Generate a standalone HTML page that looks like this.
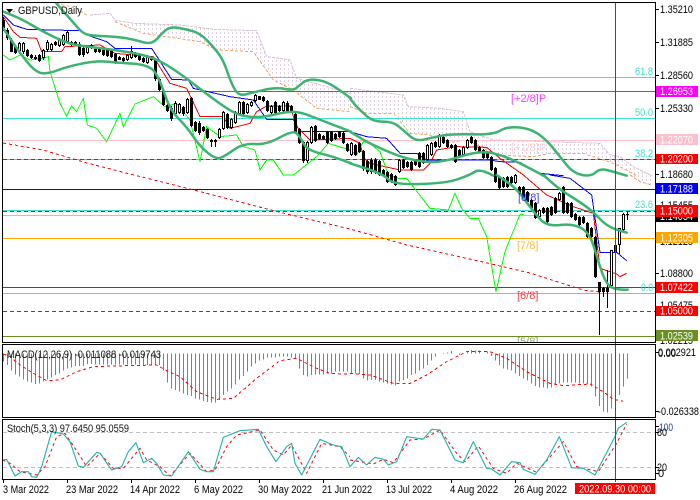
<!DOCTYPE html>
<html><head><meta charset="utf-8"><title>GBPUSD Daily</title>
<style>
html,body{margin:0;padding:0;background:#fff;width:700px;height:500px;overflow:hidden}
svg{position:absolute;left:0;top:0;display:block}
text{font-family:"Liberation Sans",sans-serif;font-size:11px}
.ax{fill:#000}.w{fill:#fff}
.thin{fill:none;stroke-width:3;shape-rendering:crispEdges}
.bb{fill:none;stroke:#3cb371;stroke-width:7.5;stroke-linejoin:round;stroke-linecap:round}
.lbl{font-size:11px;opacity:.75}
</style></head><body>
<svg width="700" height="500" viewBox="0 0 700 500" xmlns="http://www.w3.org/2000/svg">
<defs>
<pattern id="h" patternUnits="userSpaceOnUse" width="12" height="12"><rect width="3" height="6" fill="#e0cfe0"/></pattern>
<clipPath id="main"><rect x="3" y="3" width="652" height="339"/></clipPath>
<clipPath id="mc"><rect x="3" y="345" width="652" height="72"/></clipPath>
<clipPath id="st"><rect x="3" y="420" width="652" height="59"/></clipPath>
</defs>
<rect width="700" height="500" fill="#fff"/>

<g clip-path="url(#main)">
<!-- cloud -->
<g transform="scale(.33333)">
<polygon fill="url(#h)" points="345,60 400,70 540,75 640,88 770,92 800,170 870,180 890,235 1050,280 1050,335 950,325 880,270 820,240 760,155 650,150 600,125 430,100 345,65"/>
<polyline class="thin" stroke="#d8bfd8" stroke-dasharray="9 3" points="270,45 330,40 345,60 400,70 540,75 640,88 770,92 800,170 870,180 890,235 1050,280"/>
<polyline class="thin" stroke="#f4a460" stroke-dasharray="9 6" points="170,10 230,25 260,45"/>
<polyline class="thin" stroke="#f4a460" stroke-dasharray="9 6" points="12,40 20,30 45,35"/>
<polyline class="thin" stroke="#f4a460" stroke-dasharray="9 6" points="345,65 430,100 600,125 650,150 760,155 820,240 880,270 950,325 1050,335"/>
</g>
<g transform="translate(350,0) scale(.33333)">
<polygon fill="url(#h)" points="0,265 80,275 160,285 175,320 270,325 340,335 360,395 430,420 750,430 780,465 810,470 850,500 905,527 860,527 790,490 700,460 600,460 550,470 440,465 350,420 280,430 240,405 180,400 130,340 50,340 0,320"/>
<polyline class="thin" stroke="#d8bfd8" stroke-dasharray="9 3" points="0,265 80,275 160,285 175,320 270,325 340,335 360,395 430,420 750,430 780,465 810,470 850,500 905,527"/>
<polyline class="thin" stroke="#f4a460" stroke-dasharray="9 6" points="0,320 50,340 130,340 180,400 240,405 280,430 350,420 440,465 550,470 600,460 700,460 790,490 860,527"/>
</g>
<g transform="translate(350,175) scale(.33333)">
<polygon fill="url(#h)" points="840,0 905,0 905,30 880,25"/>
<polyline class="thin" stroke="#f4a460" stroke-dasharray="9 6" points="840,0 870,20 905,30"/>
</g>

<!-- horizontal levels -->
<rect x="3" y="77" width="652" height="1" fill="#40e0d0"/>
<rect x="3" y="91" width="652" height="1" fill="#ff00ff"/>
<rect x="3" y="118" width="652" height="1" fill="#40e0d0"/>
<rect x="3" y="140" width="652" height="1" fill="#ffc0cb"/>
<rect x="3" y="159" width="652" height="1" fill="#40e0d0"/>
<line x1="3" x2="655" y1="159.5" y2="159.5" stroke="#f00" stroke-dasharray="4 3" shape-rendering="crispEdges"/>
<rect x="3" y="189" width="652" height="1" fill="#0000ff"/>
<rect x="3" y="210" width="652" height="1" fill="#40e0d0"/>
<line x1="3" x2="655" y1="211.5" y2="211.5" stroke="#f00" stroke-dasharray="4 3" shape-rendering="crispEdges"/>
<rect x="3" y="215" width="652" height="1" fill="#c0c0c0"/>
<rect x="3" y="238" width="652" height="1" fill="#ffa500"/>
<rect x="3" y="287" width="652" height="1" fill="#f00"/>
<rect x="3" y="293" width="652" height="1" fill="#40e0d0"/>
<line x1="3" x2="655" y1="311.5" y2="311.5" stroke="#f00" stroke-dasharray="4 3" shape-rendering="crispEdges"/>
<rect x="3" y="336" width="652" height="1" fill="#6b8e23"/>

<!-- long MA -->
<polyline fill="none" stroke="#f00" stroke-dasharray="3 3" shape-rendering="crispEdges" points="3,143 43,150 87,163 130,174 190,189 267,209 287,214 350,229 407,245 483,262 530,273 583,290 600,292"/>

<!-- Blue / red / lime -->
<g transform="scale(.33333)">
<polyline class="thin" stroke="#00f" points="10,45 40,75 80,88 240,92 260,105 320,125 345,145 455,145 500,215 515,238 565,240 580,265 690,290 760,300 800,358 880,358 900,395 1050,395"/>
<polyline class="thin" stroke="#f00" points="10,50 40,95 60,112 110,115 125,155 185,155 195,140 300,135 345,160 460,170 510,250 560,265 600,350 670,350 690,385 750,370 770,335 800,318 870,318 890,380 930,420 1050,415"/>
<polyline class="thin" stroke="#0f0" points="10,165 30,180 60,165 90,180 130,175 145,170 150,215 180,310 200,348 215,318 230,335 250,295 262,375 290,385 320,425 360,340 370,380 405,312 460,290 495,320 530,310 570,360 600,485 620,380 660,410 710,405 730,440 765,450 780,510 800,480 820,480 850,525 880,525 950,470 985,430 1050,450"/>
</g>
<g transform="translate(350,0) scale(.33333)">
<polyline class="thin" stroke="#00f" points="0,395 50,410 110,415 150,460 200,460 230,480 420,480 450,485 510,487 570,520 640,527"/>
<polyline class="thin" stroke="#f00" points="0,415 30,430 42,475 60,490 150,510 220,510 240,490 260,450 320,440 410,442 450,475 520,525"/>
<polyline class="thin" stroke="#0f0" points="0,450 20,465 40,425 60,430 90,455 115,525 145,535 170,535 240,625 295,630 315,580 335,625 360,655 385,655 410,710 438,875 465,755 510,643 520,643"/>
</g>
<g transform="translate(350,175) scale(.33333)">
<polyline class="thin" stroke="#00f" points="600,0 660,10 725,60 750,232 800,232 830,257"/>
<polyline class="thin" stroke="#f00" points="520,0 590,60 670,95 730,115 750,280 800,297 810,305 830,295"/>
</g>

<!-- Candles -->
<g transform="translate(.5,0)" fill="none" shape-rendering="crispEdges">
<path stroke="#000" d="M3 17V31M7 28V40M11 38V52M15 46V54M19 42V54M23 42V54M27 49V57M31 54V59M35 55V60M39 54V62M43 49V60M47 40V52M51 43V51M55 41V46M59 38V47M63 34V46M67 31V43M71 41V46M75 41V46M79 42V56M83 47V57M87 46V54M91 44V49M95 48V53M99 48V53M103 49V56M107 49V57M111 50V58M115 53V64M119 56V60M123 57V62M127 54V61M131 46V59M135 52V58M139 54V61M143 57V63M147 55V64M151 56V61M155 58V81M159 78V91M163 90V106M167 104V112M171 106V121M175 101V115M179 103V114M183 106V116M187 98V114M191 97V127M195 121V132M199 121V135M203 126V132M207 128V139M211 139V147M215 139V147M219 128V139M223 111V130M227 113V129M231 118V129M235 111V124M239 101V115M243 101V115M247 103V114M251 101V107M255 94V102M259 96V100M263 96V102M267 100V112M271 105V115M275 101V114M279 105V112M283 101V112M287 101V113M291 105V112M295 113V134M299 128V144M303 141V163M307 141V163M311 126V144M315 125V142M319 133V140M323 135V140M327 131V144M331 131V142M335 133V140M339 131V138M343 131V144M347 143V152M351 142V156M355 144V156M359 142V153M363 150V171M367 160V174M371 158V174M375 158V174M379 160V176M383 169V177M387 171V183M391 173V183M395 175V186M399 159V173M403 159V169M407 161V168M411 161V171M415 159V166M419 152V168M423 152V164M427 144V161M431 142V156M435 141V148M439 134V148M443 136V144M447 139V148M451 144V149M455 144V163M459 149V158M463 146V156M467 139V149M471 136V144M475 139V151M479 146V153M483 149V159M487 151V159M491 156V171M495 167V183M499 176V189M503 177V188M507 176V188M511 176V184M515 174V184M519 186V194M523 186V199M527 191V203M531 199V209M535 202V219M539 209V218M543 207V214M547 207V223M551 206V216M555 197V214M559 192V201M563 186V214M567 202V214M571 202V218M575 213V221M579 216V226M583 216V224M587 222V238M591 227V238M595 236V278M599 282V335M603 287V297M607 270V308M611 250V287M615 243V260M619 228V254M623 213V231M627 211V220"/>
<path stroke="#000" stroke-width="3" d="M3 20V28M7 30V38M11 40V52M15 47V53M19 43V51M23 43V52M27 50V56M31 55V58M35 57V59M39 55V61M43 50V58M47 42V50M51 44V50M55 42V45M59 39V46M63 35V45M67 32V42M71 42V45M75 42V45M79 44V55M83 48V55M87 47V53M91 45V48M95 49V52M99 49V52M103 50V55M107 50V56M111 51V57M115 54V63M119 57V60M123 58V61M127 55V60M131 51V58M135 54V57M139 55V60M143 58V62M147 56V63M151 57V60M155 59V79M159 79V90M163 91V105M167 105V111M171 108V119M175 103V114M179 104V113M183 107V114M187 99V113M191 98V126M195 122V131M199 123V133M203 127V131M207 129V138M211 140V142M215 140V142M219 129V138M223 112V129M227 114V128M231 119V128M235 112V123M239 102V114M243 102V114M247 104V113M251 102V106M255 95V101M259 96V100M263 97V101M267 101V111M271 106V113M275 102V113M279 106V111M283 102V111M287 103V111M291 106V111M295 114V133M299 129V143M303 142V161M307 142V161M311 127V143M315 126V141M319 134V139M323 136V139M327 132V143M331 132V141M335 134V139M339 132V137M343 133V143M347 144V151M351 143V155M355 145V155M359 143V152M363 151V169M367 161V172M371 160V172M375 160V172M379 161V175M383 170V176M387 172V182M391 174V182M395 176V185M399 160V172M403 160V168M407 162V167M411 162V170M415 160V165M419 153V167M423 153V163M427 145V160M431 143V155M435 142V147M439 135V147M443 137V143M447 140V147M451 145V148M455 145V162M459 150V157M463 147V155M467 140V148M471 137V143M475 140V150M479 147V152M483 150V158M487 152V158M491 157V170M495 168V182M499 177V188M503 178V187M507 177V187M511 177V183M515 175V183M519 187V193M523 187V198M527 192V202M531 200V208M535 203V218M539 210V217M543 208V213M547 208V222M551 207V215M555 198V213M559 193V200M563 187V213M567 203V213M571 203V217M575 214V220M579 217V225M583 217V223M587 223V237M591 228V237M595 237V277M599 282V292M603 288V292M607 288V292M611 250V286M615 245V252M619 228V245M623 214V230M627 214V215"/>
<path stroke="#fff" d="M19 44V50M23 44V51M43 51V57M47 43V49M51 45V49M59 40V45M63 36V44M67 33V41M87 48V52M91 46V47M127 56V59M131 52V57M147 57V62M175 104V113M179 105V112M187 100V112M219 130V137M223 113V128M231 120V127M235 113V122M239 103V113M247 105V112M251 103V105M255 96V100M271 107V112M283 103V110M307 143V160M311 128V142M351 144V154M399 161V171M427 146V159M431 144V154M439 136V146M463 148V154M467 141V147M515 176V182M539 211V216M559 194V199M611 251V285M619 229V244M623 215V229"/>
</g>

<!-- Bollinger (drawn above candles in the reference) -->
<g transform="scale(.33333)">
<path class="bb" d="M165 5L182 25Q200 45 215 62Q230 80 242 92Q255 105 277 106Q300 108 325 109Q350 110 375 114Q400 118 420 124Q440 131 452 128Q465 125 477 110Q490 95 502 87Q515 80 537 84Q560 88 580 94Q600 100 620 120Q640 140 655 160Q670 180 680 210Q690 240 700 260Q710 280 720 283Q730 286 745 281Q760 277 795 269Q830 262 855 267Q880 272 890 263Q900 255 910 247Q920 240 935 239Q950 238 970 244Q990 250 1021 272L1053 295"/>
<path class="bb" d="M10 35L35 45Q60 55 90 72Q120 90 160 110Q200 130 230 135Q260 140 305 145Q350 150 405 160Q460 170 500 195Q540 220 575 247Q610 275 655 307Q700 340 725 346Q750 352 775 351Q800 350 840 340Q880 330 915 342Q950 355 1001 375L1053 395"/>
<path class="bb" d="M10 85L35 122Q60 160 85 190Q110 220 130 220Q150 220 175 210Q200 200 245 191Q290 182 320 185Q350 188 400 191Q450 195 465 217Q480 240 495 285Q510 330 535 355Q560 380 580 410Q600 440 625 460Q650 480 665 472Q680 465 705 447Q730 430 765 432Q800 435 840 412Q880 390 890 400Q900 410 910 430Q920 450 960 460Q1000 470 1026 480L1053 490"/>
</g>
<g transform="translate(350,0) scale(.33333)">
<path class="bb" d="M0 295L17 317Q35 335 52 350Q70 365 100 365Q130 365 147 380Q165 395 182 410Q200 425 225 418Q250 412 275 407Q300 402 365 403Q430 405 450 392Q470 380 505 382Q540 385 565 402Q590 420 610 445Q630 470 650 495Q670 520 697 525Q725 530 737 517Q750 505 770 510Q790 515 830 527"/>
<path class="bb" d="M0 395L50 425Q100 450 140 465Q180 480 225 485Q270 490 330 470Q390 450 430 460Q470 470 510 490Q550 510 580 527"/>
<path class="bb" d="M0 490L50 506Q100 522 115 538Q130 555 210 552Q290 550 325 537Q360 525 375 515Q390 505 430 527"/>
</g>
<g transform="translate(350,175) scale(.33333)">
<path class="bb" d="M580 0L605 22Q630 45 675 72Q720 100 745 127Q770 155 800 164L830 173"/>
<path class="bb" d="M440 0L470 20Q500 40 525 75Q550 110 570 132Q590 155 630 150Q670 145 695 160Q720 175 732 217Q745 260 757 295Q770 330 785 337Q800 345 833 344"/>
</g>
</g>

<!-- MACD -->
<g clip-path="url(#mc)">
<g transform="translate(0,340) scale(.33333)">
<path class="thin" stroke="#3a8fe8" d="M10 40V65M22 40V75M34 40V92M46 40V103M58 40V110M70 40V118M82 40V125M94 40V128M106 40V132M118 40V130M130 40V125M142 40V118M154 40V112M166 40V105M178 40V100M190 40V92M202 40V85M214 40V82M226 40V78M238 40V78M250 40V78M262 40V72M274 40V72M286 40V74M298 40V74M310 40V74M322 40V74M334 40V74M346 40V74M358 40V74M370 40V74M382 40V74M394 40V74M406 40V74M418 40V74M430 40V75M442 40V75M454 40V75M466 40V75M478 40V75M490 40V92M502 40V128M514 40V145M526 40V150M538 40V155M550 40V160M562 40V165M574 40V168M586 40V175M598 40V178M610 40V183M622 40V186M634 40V188M646 40V188M658 40V180M670 40V165M682 40V155M694 40V145M706 40V133M718 40V118M730 40V108M742 40V95M754 40V80M766 40V70M778 40V62M790 40V58M802 40V52M814 40V52M826 40V52M838 40V50M850 40V50M862 40V50M874 40V53M886 40V55M898 40V85M910 40V105M922 40V110M934 40V105M946 40V103M958 40V103M970 40V103M982 40V100M994 40V100M1006 40V95M1018 40V95M1030 40V95M1042 40V95"/>
<polyline class="thin" stroke="#f00" stroke-dasharray="9 9" points="10,42 30,50 60,75 100,100 140,122 180,120 230,95 280,80 380,77 470,75 500,92 540,110 590,155 650,178 700,175 770,115 840,62 890,55 950,85 990,100 1050,103"/>
</g>
<g transform="translate(350,340) scale(.33333)">
<path class="thin" stroke="#3a8fe8" d="M4 40V100M16 40V100M28 40V102M40 40V115M52 40V122M64 40V120M76 40V120M88 40V125M100 40V128M112 40V130M124 40V133M136 40V137M148 40V125M160 40V120M172 40V115M184 40V105M196 40V100M208 40V92M220 40V85M232 40V75M244 40V62M256 40V50M280 40V42M292 40V37M304 40V33M316 40V40M328 40V45M340 40V40M352 40V33M364 40V30M376 40V32M388 40V32M400 40V40M412 40V35M424 40V48M436 40V62M448 40V75M460 40V85M472 40V88M484 40V92M496 40V100M508 40V108M520 40V115M532 40V122M544 40V130M556 40V138M568 40V142M580 40V143M592 40V145M604 40V143M616 40V135M628 40V130M640 40V128M652 40V127M664 40V127M676 40V127M688 40V130M700 40V130M712 40V133M724 40V140M736 40V170M748 40V198M760 40V215M772 40V218M784 40V205M808 40V165M820 40V140M832 40V115"/>
<polyline class="thin" stroke="#f00" stroke-dasharray="9 9" points="0,100 60,105 130,130 180,130 230,105 290,65 350,35 420,35 470,55 530,95 600,130 640,137 720,132 760,155 790,178 820,184"/>
</g>
</g>

<!-- Stoch -->
<g clip-path="url(#st)">
<line x1="3" x2="655" y1="432.5" y2="432.5" stroke="#c0c0c0" stroke-dasharray="4 3" shape-rendering="crispEdges"/>
<line x1="3" x2="655" y1="467.5" y2="467.5" stroke="#c0c0c0" stroke-dasharray="4 3" shape-rendering="crispEdges"/>
<g transform="translate(0,340) scale(.33333)">
<polyline fill="none" stroke="#f00" stroke-width="3" stroke-dasharray="9 9" points="8,360 30,370 60,395 110,405 135,380 170,290 195,280 235,340 260,380 300,340 340,385 370,385 420,325 440,360 480,380 510,408 570,340 620,395 645,390 680,320 710,285 780,270 820,330 850,345 875,315 920,400 965,310 1020,320 1050,350"/>
<polyline fill="none" stroke="#20b2aa" stroke-width="3.3" stroke-linejoin="round" points="8,360 20,358 45,408 65,395 85,395 95,410 110,412 125,380 155,275 190,282 210,305 235,378 250,382 290,337 300,340 335,390 365,380 385,335 408,308 430,368 455,355 470,370 490,405 515,408 565,335 600,388 620,395 640,395 670,292 695,282 720,272 775,268 800,320 828,365 860,320 875,310 885,370 905,405 960,298 1000,315 1025,320 1050,380"/>
</g>
<g transform="translate(350,340) scale(.33333)">
<polyline fill="none" stroke="#f00" stroke-width="3" stroke-dasharray="9 9" points="0,360 30,365 70,372 100,358 130,368 180,300 220,297 270,270 320,340 345,365 385,318 430,385 470,400 500,370 560,397 640,305 680,380 745,395 800,310 830,252"/>
<polyline fill="none" stroke="#20b2aa" stroke-width="3.3" stroke-linejoin="round" points="0,380 25,352 50,375 75,352 100,358 115,375 140,365 170,290 220,297 245,268 270,270 315,360 340,368 370,305 410,385 425,387 450,405 485,365 510,368 520,388 555,403 590,360 628,290 665,383 700,385 735,405 795,290 805,265 830,247"/>
</g>
</g>

<!-- vertical cursor -->
<rect x="615" y="3" width="1" height="479" fill="#f00"/>

<!-- frames -->
<g fill="#000">
<rect x="2" y="2" width="654" height="1"/>
<rect x="2" y="2" width="1" height="341"/>
<rect x="655" y="2" width="1" height="341"/>
<rect x="2" y="342" width="654" height="1"/>
<rect x="2" y="344" width="654" height="1"/>
<rect x="2" y="344" width="1" height="74"/>
<rect x="655" y="344" width="1" height="74"/>
<rect x="2" y="417" width="654" height="1"/>
<rect x="2" y="419" width="654" height="1"/>
<rect x="2" y="419" width="1" height="61"/>
<rect x="655" y="419" width="1" height="61"/>
<rect x="2" y="479" width="654" height="1"/>
<!-- right ticks -->
<rect x="655" y="9" width="4" height="1"/><rect x="655" y="42" width="4" height="1"/><rect x="655" y="75" width="4" height="1"/><rect x="655" y="108" width="4" height="1"/><rect x="655" y="174" width="4" height="1"/><rect x="655" y="273" width="4" height="1"/><rect x="655" y="352" width="4" height="1"/><rect x="655" y="411" width="4" height="1"/><rect x="655" y="426" width="4" height="1"/><rect x="655" y="432" width="4" height="1"/><rect x="655" y="467" width="4" height="1"/><rect x="655" y="473" width="4" height="1"/>
<!-- bottom ticks -->
<rect x="3" y="480" width="1" height="3"/><rect x="67" y="480" width="1" height="3"/><rect x="131" y="480" width="1" height="3"/><rect x="195" y="480" width="1" height="3"/><rect x="259" y="480" width="1" height="3"/><rect x="323" y="480" width="1" height="3"/><rect x="387" y="480" width="1" height="3"/><rect x="451" y="480" width="1" height="3"/><rect x="515" y="480" width="1" height="3"/>
</g>

<!-- Title -->
<polygon points="6,9 13,9 9.500,13" fill="#000"/>
<text x="18" y="14" textLength="64" lengthAdjust="spacingAndGlyphs" fill="#111">GBPUSD,Daily</text>

<!-- Fibo & Murray labels -->
<g fill="#40e0d0">
<text x="635" y="75" textLength="18" lengthAdjust="spacingAndGlyphs">61.8</text>
<text x="635" y="116" textLength="18" lengthAdjust="spacingAndGlyphs">50.0</text>
<text x="635" y="157" textLength="18" lengthAdjust="spacingAndGlyphs">38.2</text>
<text x="635" y="208" textLength="18" lengthAdjust="spacingAndGlyphs">23.6</text>
<text x="641" y="291" textLength="12" lengthAdjust="spacingAndGlyphs">0.0</text>
</g>
<text x="511" y="102" class="lbl" fill="#ff00ff">[+2/8]P</text>
<text x="511" y="151" class="lbl" fill="#ffc0cb">[+1/8]P</text>
<text x="518" y="201" class="lbl" fill="#0000ff">[8/8]</text>
<text x="517" y="249" class="lbl" fill="#ffa500">[7/8]</text>
<text x="517" y="299" class="lbl" fill="#f00">[6/8]</text>
<g clip-path="url(#main)"><text x="517" y="345" class="lbl" fill="#6b8e23">[5/8]</text></g>

<!-- Axis labels -->
<g class="ax">
<text x="660" y="13" textLength="33" lengthAdjust="spacingAndGlyphs">1.35210</text>
<text x="660" y="46" textLength="33" lengthAdjust="spacingAndGlyphs">1.31885</text>
<text x="660" y="79" textLength="33" lengthAdjust="spacingAndGlyphs">1.28560</text>
<text x="660" y="112" textLength="33" lengthAdjust="spacingAndGlyphs">1.25330</text>
<text x="660" y="178" textLength="33" lengthAdjust="spacingAndGlyphs">1.18680</text>
<text x="660" y="209" textLength="33" lengthAdjust="spacingAndGlyphs">1.15455</text>
<text x="660" y="245" textLength="33" lengthAdjust="spacingAndGlyphs">1.12125</text>
<text x="660" y="277" textLength="33" lengthAdjust="spacingAndGlyphs">1.08800</text>
<text x="660" y="309" textLength="33" lengthAdjust="spacingAndGlyphs">1.05475</text>
<text x="660" y="344" textLength="33" lengthAdjust="spacingAndGlyphs">1.02215</text>
</g>
<rect x="656" y="86" width="42" height="11" fill="#ff00ff"/><text x="660" y="95" class="w" textLength="33" lengthAdjust="spacingAndGlyphs">1.26953</text>
<rect x="656" y="134" width="42" height="11" fill="#ffc0cb"/><text x="660" y="143.500" class="w" textLength="33" lengthAdjust="spacingAndGlyphs">1.22070</text>
<rect x="656" y="154" width="42" height="10" fill="#f00"/><text x="660" y="162.500" class="w" textLength="33" lengthAdjust="spacingAndGlyphs">1.20200</text>
<rect x="656" y="183" width="42" height="11" fill="#00f"/><text x="660" y="192.500" class="w" textLength="33" lengthAdjust="spacingAndGlyphs">1.17188</text>
<rect x="656" y="214" width="42" height="8" fill="#000"/><text x="660" y="220" class="w" textLength="33" lengthAdjust="spacingAndGlyphs">1.14034</text>
<rect x="656" y="205" width="42" height="12" fill="#f00"/><text x="660" y="214.500" class="w" textLength="33" lengthAdjust="spacingAndGlyphs">1.15000</text>
<rect x="656" y="232" width="42" height="11" fill="#ffa500"/><text x="660" y="241.500" class="w" textLength="33" lengthAdjust="spacingAndGlyphs">1.12305</text>
<rect x="656" y="282" width="42" height="11" fill="#f00"/><text x="660" y="291" class="w" textLength="33" lengthAdjust="spacingAndGlyphs">1.07422</text>
<rect x="656" y="306" width="42" height="10" fill="#f00"/><text x="660" y="314.500" class="w" textLength="33" lengthAdjust="spacingAndGlyphs">1.05000</text>
<rect x="656" y="330" width="42" height="11" fill="#6b8e23"/><text x="660" y="339.500" class="w" textLength="33" lengthAdjust="spacingAndGlyphs">1.02539</text>

<!-- Pane texts -->
<text x="7" y="358" fill="#111" textLength="154" lengthAdjust="spacingAndGlyphs">MACD(12,26,9) -0.011088 -0.019743</text>
<text x="7" y="432" fill="#111" textLength="122" lengthAdjust="spacingAndGlyphs">Stoch(5,3,3) 97.6450 95.0559</text>
<text x="658" y="356" fill="#000" textLength="38" lengthAdjust="spacingAndGlyphs">0.002921</text>
<text x="658" y="357" fill="#000" textLength="18" lengthAdjust="spacingAndGlyphs">0.00</text>
<text x="658" y="415" fill="#000" textLength="41" lengthAdjust="spacingAndGlyphs">-0.026338</text>
<text x="659" y="431" fill="#1a3d8f" textLength="14" lengthAdjust="spacingAndGlyphs">100</text>
<text x="657" y="436" fill="#000" textLength="10" lengthAdjust="spacingAndGlyphs">80</text>
<text x="657" y="471" fill="#000" textLength="10" lengthAdjust="spacingAndGlyphs">20</text>
<text x="658" y="477" fill="#000">0</text>

<!-- Time -->
<g fill="#000">
<text x="3" y="493" textLength="46" lengthAdjust="spacingAndGlyphs">3 Mar 2022</text>
<text x="66" y="493" textLength="52" lengthAdjust="spacingAndGlyphs">23 Mar 2022</text>
<text x="130" y="493" textLength="50" lengthAdjust="spacingAndGlyphs">14 Apr 2022</text>
<text x="194" y="493" textLength="49" lengthAdjust="spacingAndGlyphs">6 May 2022</text>
<text x="258" y="493" textLength="54" lengthAdjust="spacingAndGlyphs">30 May 2022</text>
<text x="322" y="493" textLength="50" lengthAdjust="spacingAndGlyphs">21 Jun 2022</text>
<text x="386" y="493" textLength="46" lengthAdjust="spacingAndGlyphs">13 Jul 2022</text>
<text x="450" y="493" textLength="48" lengthAdjust="spacingAndGlyphs">4 Aug 2022</text>
<text x="514" y="493" textLength="53" lengthAdjust="spacingAndGlyphs">26 Aug 2022</text>
</g>
<rect x="575" y="483" width="80" height="11" fill="#f00"/>
<text x="579" y="492.500" class="w" textLength="72" lengthAdjust="spacingAndGlyphs">2022.09.30 00:00</text>
</svg>
</body></html>
